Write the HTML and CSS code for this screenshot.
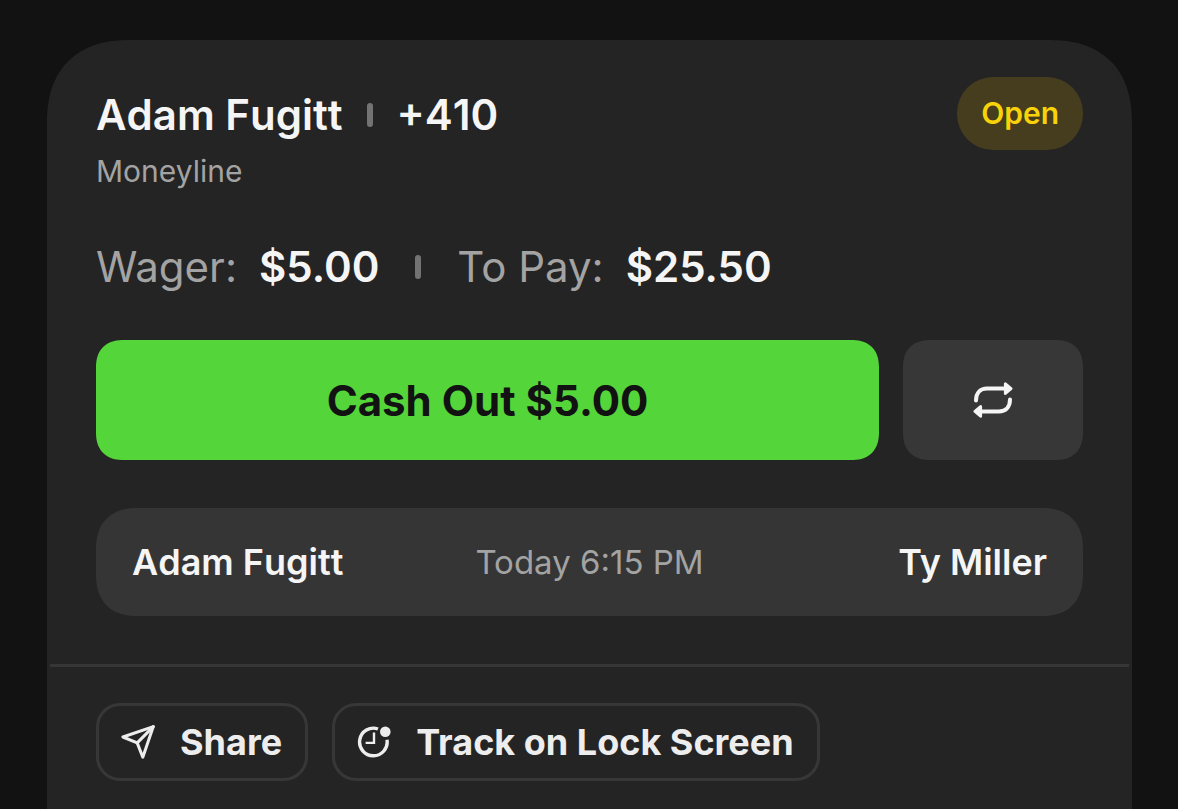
FILE: index.html
```html
<!DOCTYPE html>
<html lang="en">
<head>
    <meta charset="UTF-8">
    <meta name="viewport" content="width=device-width, initial-scale=1.0">
    <title>Open Bet</title>
    <link rel="stylesheet" href="styles.css">
</head>
<body>
    <main class="bet-card">
        <div class="bet-body">
            <header class="bet-header">
                <div class="bet-heading">
                    <h1 class="bet-title">
                        <span>Adam Fugitt</span>
                        <span class="divider"></span>
                        <span>+410</span>
                    </h1>
                    <p class="bet-market">Moneyline</p>
                </div>
                <span class="status">Open</span>
            </header>

            <dl class="amounts">
                <div class="amount">
                    <dt>Wager:</dt>
                    <dd>$5.00</dd>
                </div>
                <div class="divider"></div>
                <div class="amount">
                    <dt>To Pay:</dt>
                    <dd>$25.50</dd>
                </div>
            </dl>

            <div class="actions">
                <button type="button" class="cash-out">Cash Out $5.00</button>
                <button type="button" class="rebet" aria-label="Bet again">
                    <svg width="40" height="40" viewBox="0 0 40 40" fill="none" stroke="currentColor" stroke-width="4" stroke-linecap="round" stroke-linejoin="round">
                        <path d="M3 20.5C3 13 7.5 8.6 14 8.6H33"/>
                        <path d="M37 19.5C37 27 32.5 31.4 26 31.4H7"/>
                        <path d="M32.4 3.8L38 8.6L32.4 13.4Z" fill="currentColor" stroke-width="3"/>
                        <path d="M7.6 26.6L2 31.4L7.6 36.2Z" fill="currentColor" stroke-width="3"/>
                    </svg>
                </button>
            </div>

            <div class="matchup">
                <span class="fighter home">Adam Fugitt</span>
                <time class="start">Today 6:15 PM</time>
                <span class="fighter away">Ty Miller</span>
            </div>
        </div>

        <footer class="bet-footer">
            <button type="button" class="chip">
                <svg width="36" height="36" viewBox="0 0 36 36" fill="none" stroke="currentColor" stroke-width="3" stroke-linecap="round" stroke-linejoin="round">
                    <path d="M32.3 2.6L1.9 13L16.2 18.9L21.8 33.2Z"/>
                    <path d="M16.2 18.9L32.3 2.6"/>
                </svg>
                Share
            </button>
            <button type="button" class="chip">
                <svg width="36" height="36" viewBox="0 0 36 36" fill="none" stroke="currentColor" stroke-width="3.4">
                    <path d="M21 5A13.8 13.8 0 1 0 30 15.8"/>
                    <path d="M17 8.6V18.9H8.6" stroke-width="2.4"/>
                    <circle cx="28.3" cy="7.7" r="5.3" fill="currentColor" stroke="none"/>
                </svg>
                Track on Lock Screen
            </button>
        </footer>
    </main>
</body>
</html>
```
FILE: styles.css
```css
* {
    box-sizing: border-box;
}

body {
    margin: 0;
    padding: 40px 46px 0 47px;
    min-height: 100vh;
    display: flex;
    background: #121212;
    color: #f5f5f5;
    font-family: Inter, "Liberation Sans", sans-serif;
}

h1, p, dl, dd {
    margin: 0;
}

button {
    font: inherit;
    color: inherit;
    cursor: pointer;
}

.bet-card {
    flex: 1;
    border: 3px solid #242424;
    border-bottom: 0;
    border-radius: 84px 84px 0 0;
    corner-shape: superellipse(1.25);
    background: #242424;
}

.bet-body {
    padding: 34px 46px 48px;
    border-bottom: 3px solid #363636;
}

.bet-header {
    display: flex;
    justify-content: space-between;
    align-items: flex-start;
}

.bet-heading {
    padding-top: 12px;
}

.bet-title {
    display: flex;
    align-items: center;
    gap: 24px;
    font-size: 42px;
    line-height: 52px;
    font-weight: 600;
    font-kerning: none;
}

.divider {
    width: 6px;
    height: 24px;
    border-radius: 3px;
    background: #737373;
}

.bet-market {
    margin-top: 12px;
    font-size: 30px;
    line-height: 36px;
    color: #a3a3a3;
}

.status {
    padding: 0 24px;
    border-radius: 36px;
    background: #453d1e;
    color: #f8d30a;
    font-size: 30px;
    line-height: 73px;
    font-weight: 600;
}

.amounts {
    display: flex;
    align-items: center;
    gap: 36px;
    margin-top: 52px;
    font-size: 42px;
    line-height: 52px;
}

.amount {
    display: flex;
    gap: 22px;
}

.amount dt {
    color: #a3a3a3;
}

.amount dd {
    font-weight: 600;
}

.actions {
    display: flex;
    gap: 24px;
    margin-top: 47px;
}

.cash-out,
.rebet {
    height: 120px;
    border: 0;
    border-radius: 28px;
    corner-shape: superellipse(1.25);
}

.cash-out {
    flex: 1;
    background: #54d53a;
    color: #121212;
    font-size: 42px;
    font-weight: 700;
}

.rebet {
    width: 180px;
    display: flex;
    align-items: center;
    justify-content: center;
    background: #373737;
}

.matchup {
    display: grid;
    grid-template-columns: 1fr auto 1fr;
    align-items: center;
    margin-top: 48px;
    padding: 0 36px;
    border-radius: 42px;
    corner-shape: superellipse(1.25);
    background: #353535;
    line-height: 108px;
}

.fighter {
    font-size: 36px;
    font-weight: 600;
}

.home {
    font-kerning: none;
}

.away {
    text-align: right;
}

.start {
    color: #a3a3a3;
    font-size: 33px;
}

.bet-footer {
    display: flex;
    gap: 24px;
    padding: 36px 46px 28px;
}

.chip {
    display: flex;
    align-items: center;
    gap: 23px;
    height: 78px;
    padding: 0 23px 0 22px;
    border: 3px solid #373737;
    border-radius: 24px;
    background: none;
    color: #ededed;
    font-size: 36px;
    font-weight: 700;
}
```
